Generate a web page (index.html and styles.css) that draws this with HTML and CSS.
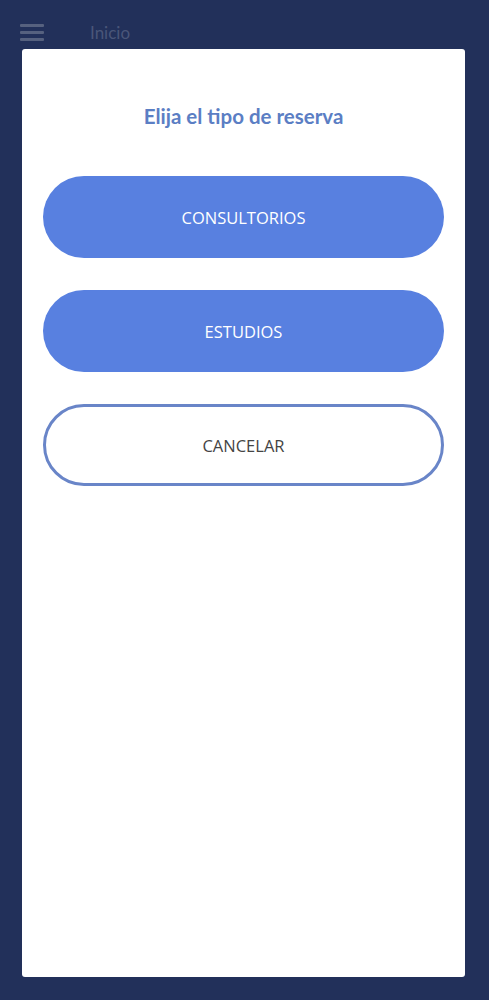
FILE: index.html
```html
<!DOCTYPE html>
<html lang="es">
<head>
<meta charset="UTF-8">
<meta name="viewport" content="width=device-width, initial-scale=1.0">
<title>Inicio</title>
<link rel="stylesheet" href="styles.css">
</head>
<body>
    <div class="header">
        <div class="menu-icon">
            <span></span>
            <span></span>
            <span></span>
        </div>
        <div class="header-title">Inicio</div>
    </div>
    <div class="modal">
        <div class="modal-title">Elija el tipo de reserva</div>
        <button class="option">CONSULTORIOS</button>
        <button class="option">ESTUDIOS</button>
        <button class="option cancel">CANCELAR</button>
    </div>
</body>
</html>
```

FILE: styles.css
```css
body {
    margin: 0;
    background-color: #22305a;
    font-family: "Open Sans", sans-serif;
    height: 1000px;
    overflow: hidden;
}
.header {
    display: flex;
    align-items: center;
    height: 49px;
    padding: 15px 0 0 20px;
    box-sizing: border-box;
}
.menu-icon {
    display: flex;
    flex-direction: column;
    gap: 4px;
    width: 24px;
}
.menu-icon span {
    display: block;
    height: 3px;
    background-color: #56617f;
    border-radius: 1px;
}
.header-title {
    margin-left: 46px;
    font-family: Lato, sans-serif;
    font-size: 17px;
    color: #4a5679;
}
.modal {
    display: flex;
    flex-direction: column;
    align-items: center;
    gap: 32px;
    margin: 0 24px 0 22px;
    height: 928px;
    padding: 55px 21px 0 21px;
    box-sizing: border-box;
    background-color: #fff;
    border-radius: 3px;
}
.modal-title {
    font-family: Lato, sans-serif;
    font-weight: bold;
    font-size: 20.5px;
    line-height: 24px;
    color: #5b7ec4;
    margin-bottom: 16px;
}
.option {
    width: 100%;
    height: 82px;
    border: none;
    border-radius: 41px;
    background-color: #5880e0;
    color: #fff;
    font-family: "Open Sans", sans-serif;
    font-size: 16.5px;
    cursor: pointer;
    flex-shrink: 0;
}
.option.cancel {
    background-color: #fff;
    border: 3px solid #6985c8;
    color: #444;
}
```
